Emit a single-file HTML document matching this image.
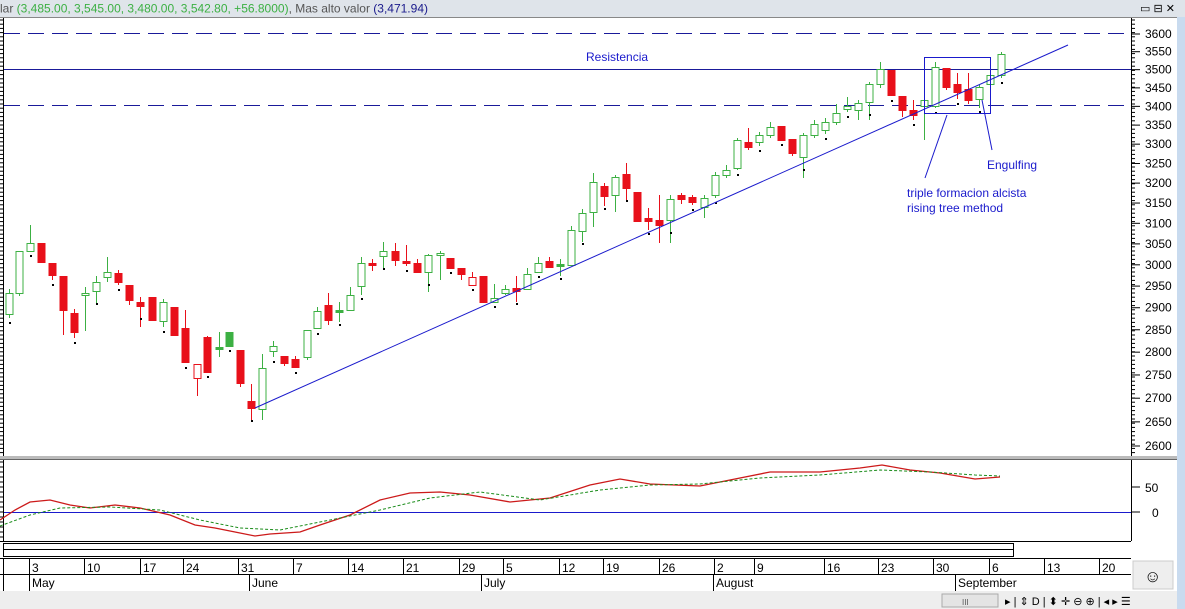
<!DOCTYPE html>
<html><head><meta charset="utf-8">
<style>
html,body{margin:0;padding:0;width:1185px;height:609px;overflow:hidden;background:#fff;font-family:"Liberation Sans",sans-serif}
</style></head><body>
<svg id="s" width="1185" height="609" xmlns="http://www.w3.org/2000/svg" style="position:absolute;left:0;top:0;font-family:'Liberation Sans',sans-serif">
<rect x="0" y="0" width="1185" height="609" fill="#fff"/>
<rect x="0" y="0" width="1185" height="17" fill="#dfe4ea"/>
<text x="0" y="12.5" font-size="12" fill="#555">lar <tspan fill="#3cb043">(3,485.00, 3,545.00, 3,480.00, 3,542.80, +56.8000)</tspan>, Mas  alto valor <tspan fill="#1a1a8c">(3,471.94)</tspan></text>
<rect x="1138" y="0" width="47" height="17" fill="#dfe4ea"/>
<text x="1140" y="12" font-size="11" fill="#000">▭ ⊟ ✕</text>
<line x1="0" y1="17.5" x2="1177" y2="17.5" stroke="#888"/>
<rect x="1177" y="17" width="8" height="592" fill="#c9dbef"/>
<line x1="3.5" y1="18" x2="3.5" y2="456" stroke="#000"/>
<g id="lt"></g>
<line x1="1131.5" y1="18" x2="1131.5" y2="456" stroke="#000"/>
<g id="rt"></g>
<g font-size="12" fill="#000" id="rl"></g>
<line x1="4" y1="33.5" x2="1128" y2="33.5" stroke="#1a1a9a" stroke-dasharray="16,8"/>
<line x1="4" y1="105.5" x2="1128" y2="105.5" stroke="#1a1a9a" stroke-dasharray="16,8"/>
<line x1="4" y1="69.5" x2="1131" y2="69.5" stroke="#1a1a9a"/>
<g id="c"></g>
<line x1="255" y1="408" x2="1068" y2="45" stroke="#1a1acc" stroke-width="1"/>
<rect x="924.5" y="57.5" width="66" height="56" fill="none" stroke="#1a1acc"/>
<line x1="947" y1="115" x2="925" y2="178" stroke="#1a1acc"/>
<line x1="982" y1="100" x2="992" y2="150" stroke="#1a1acc"/>
<g font-size="12" fill="#1a1acc">
<text x="586" y="61">Resistencia</text>
<text x="987" y="169">Engulfing</text>
<text x="907" y="197">triple formacion alcista</text>
<text x="907" y="212">rising tree method</text>
</g>
<rect x="0" y="456" width="1177" height="4" fill="#bbb"/>
<line x1="0" y1="459.5" x2="1177" y2="459.5" stroke="#666"/>
<line x1="3.5" y1="460" x2="3.5" y2="541" stroke="#000"/>
<line x1="1131.5" y1="460" x2="1131.5" y2="541" stroke="#000"/>
<g id="ot"></g>
<text x="1145" y="492" font-size="12">50</text>
<text x="1152" y="517" font-size="12">0</text>
<line x1="4" y1="512.5" x2="1131" y2="512.5" stroke="#1a1acc"/>
<polyline fill="none" stroke="#cc1a1a" stroke-width="1.3" points="0,520 15,510 30,502 50,500 70,505 90,508 115,505 140,508 170,515 195,525 215,528 235,532 255,536 270,534 300,532 320,525 350,515 380,500 410,493 440,492 470,495 510,502 550,498 590,485 620,479 650,484 700,486 730,480 770,472 820,472 860,468 882,465 910,470 940,473 975,479 1000,477"/>
<polyline fill="none" stroke="#1a8c1a" stroke-width="1" stroke-dasharray="3,2" points="0,526 30,515 60,508 110,507 160,510 200,520 240,528 280,530 320,522 380,510 430,498 480,492 540,500 600,490 650,485 700,484 760,478 820,475 880,470 930,472 975,475 1000,476"/>
<line x1="0" y1="541.5" x2="1131" y2="541.5" stroke="#000"/>
<rect x="3.5" y="543.5" width="1010" height="13" fill="#fff" stroke="#000"/>
<line x1="4" y1="549.5" x2="1013" y2="549.5" stroke="#000"/>
<line x1="0" y1="558.5" x2="1131" y2="558.5" stroke="#000"/>
<line x1="3.5" y1="558" x2="3.5" y2="591" stroke="#000"/>
<line x1="0" y1="574.5" x2="1131" y2="574.5" stroke="#000"/>
<g id="dt" font-size="12"></g>
<rect x="1133" y="561" width="40" height="28" fill="#eee" stroke="#ccc"/>
<text x="1144" y="582" font-size="17">☺</text>
<rect x="0" y="591" width="1177" height="18" fill="#eeeeee"/>
<rect x="942" y="594" width="56" height="13" fill="#e4e4e4" stroke="#aaa"/>
<text x="962" y="605" font-size="8" fill="#555">III</text>
<text x="1005" y="605" font-size="11" fill="#000">▸ | ⇕ D | ⬍ ✛ ⊖ ⊕ | ◂ ▸ ☰</text>
</svg>
<script>
var ns='http://www.w3.org/2000/svg';
function el(p,t,a,txt){var e=document.createElementNS(ns,t);for(var k in a)e.setAttribute(k,a[k]);if(txt)e.textContent=txt;document.getElementById(p).appendChild(e);}
for(var y=20;y<456;y+=4.2){el('lt','line',{x1:0,x2:4,y1:y,y2:y,stroke:'#000'});el('rt','line',{x1:1131,x2:1135,y1:y,y2:y,stroke:'#000'});}
function py(p){return 34+(Math.log(3600)-Math.log(p))*1266;}
for(var p=3600;p>=2600;p-=50){var y=py(p);el('rt','line',{x1:1131,x2:1140,y1:y,y2:y,stroke:'#000'});el('rl','text',{x:1145,y:y+4},''+p);}
for(var y=462;y<541;y+=5)el('ot','line',{x1:0,x2:4,y1:y,y2:y,stroke:'#000'});
[487,512].forEach(function(a){el('ot','line',{x1:1131,x2:1140,y1:a,y2:a,stroke:'#000'});});
var C=[[9,293,314,289,318,'g'],[19,251,293,251,296,'g'],[30,243,251,225,251,'g'],[41,243,262,243,262,'r'],[52,263,275,263,280,'r'],[63,276,310,276,335,'r'],[74,313,332,309,338,'r'],[85,293,295,287,331,'g'],[96,282,291,276,304,'g'],[107,272,277,257,282,'g'],[118,273,282,270,285,'r'],[129,285,300,285,305,'r'],[140,302,306,297,327,'r'],[152,297,320,297,320,'r'],[163,302,321,299,327,'g'],[174,307,335,307,335,'r'],[185,328,362,310,363,'r'],[197,364,378,364,396,'h'],[207,337,372,336,372,'r'],[219,347,349,332,357,'G'],[229,332,346,332,346,'G'],[240,350,383,350,387,'r'],[251,401,408,384,420,'r'],[262,368,409,354,420,'g'],[273,346,351,341,357,'g'],[284,356,363,356,366,'r'],[295,359,367,356,368,'r'],
[307,330,357,330,360,'g'],[317,311,328,307,329,'g'],[328,305,320,293,325,'r'],[339,310,312,302,322,'G'],[350,295,310,287,311,'g'],[361,263,286,257,295,'g'],[372,263,265,259,271,'r'],[383,251,256,242,268,'g'],[395,251,260,243,266,'r'],[406,261,263,245,266,'r'],[417,263,272,259,272,'r'],[428,255,272,254,292,'g'],[440,253,255,251,280,'g'],[450,258,268,258,268,'r'],[461,268,274,268,280,'r'],[472,277,285,272,285,'h'],[483,276,302,276,302,'r'],[494,298,302,284,302,'g'],[505,289,293,285,295,'g'],[516,288,291,276,302,'r'],[527,274,289,268,289,'g'],[538,263,272,257,272,'g'],[549,261,267,257,268,'r'],[560,264,266,259,276,'G'],[571,230,265,226,265,'g'],[582,213,231,209,242,'g'],[593,182,212,173,227,'g'],[604,186,196,183,206,'r'],
[615,177,195,175,212,'g'],[626,174,188,163,200,'r'],[637,192,221,192,221,'r'],[648,218,221,208,230,'r'],[659,220,225,195,243,'r'],[670,199,220,195,243,'g'],[681,195,199,193,204,'r'],[692,197,202,195,205,'r'],[704,198,207,195,218,'g'],[715,175,195,172,198,'g'],[726,170,175,165,178,'g'],[737,140,168,138,170,'g'],[748,142,147,128,150,'r'],[759,135,142,132,146,'g'],[770,127,135,122,138,'g'],[781,126,140,126,140,'r'],[792,139,153,139,156,'r'],[803,135,157,133,178,'g'],[814,124,135,120,138,'g'],[825,122,130,118,134,'g'],[836,113,122,104,125,'g'],[847,106,109,97,112,'g'],[858,103,110,100,120,'g'],[869,84,102,82,120,'g'],[880,69,84,62,88,'g'],[891,70,95,70,96,'r'],[902,96,110,96,117,'r'],[913,110,115,100,120,'r'],[924,100,106,60,140,'g'],[935,67,106,62,108,'g'],[946,68,87,68,90,'r'],[957,84,92,73,99,'r'],[968,89,100,73,104,'r'],[979,87,99,85,108,'g'],[990,75,84,70,95,'g'],[1001,54,75,52,78,'g']];
C.forEach(function(c,i){var x=c[0],t=c[5],col=(t=='g'||t=='G')?'#3cb043':'#e8101a';var w=7;
el('c','line',{x1:x+.5,x2:x+.5,y1:c[3],y2:c[4],stroke:col});
var h=Math.max(c[2]-c[1],2);
if(t=='g'||t=='h')el('c','rect',{x:x-w/2+.5,y:c[1]+.5,width:w,height:h,fill:'#fff',stroke:col});
else el('c','rect',{x:x-w/2,y:c[1],width:w+1,height:h+1,fill:col});
if(i%2==0) el('c','rect',{x:x,y:Math.min(c[4]+4,c[2]+12),width:2,height:2,fill:'#000'});
});
var D=[[32,'3'],[87,'10'],[143,'17'],[186,'24'],[241,'31'],[296,'7'],[351,'14'],[406,'21'],[462,'29'],[506,'5'],[562,'12'],[606,'19'],[662,'26'],[717,'2'],[757,'9'],[827,'16'],[881,'23'],[936,'30'],[992,'6'],[1047,'13'],[1102,'20']];
D.forEach(function(d){el('dt','line',{x1:d[0]-2.5,x2:d[0]-2.5,y1:558,y2:574,stroke:'#000'});el('dt','text',{x:d[0],y:572},d[1]);});
[[32,'May'],[252,'June'],[484,'July'],[716,'August'],[958,'September']].forEach(function(m){el('dt','line',{x1:m[0]-2.5,x2:m[0]-2.5,y1:574,y2:591,stroke:'#000'});el('dt','text',{x:m[0],y:587},m[1]);});
</script>
</body></html>
